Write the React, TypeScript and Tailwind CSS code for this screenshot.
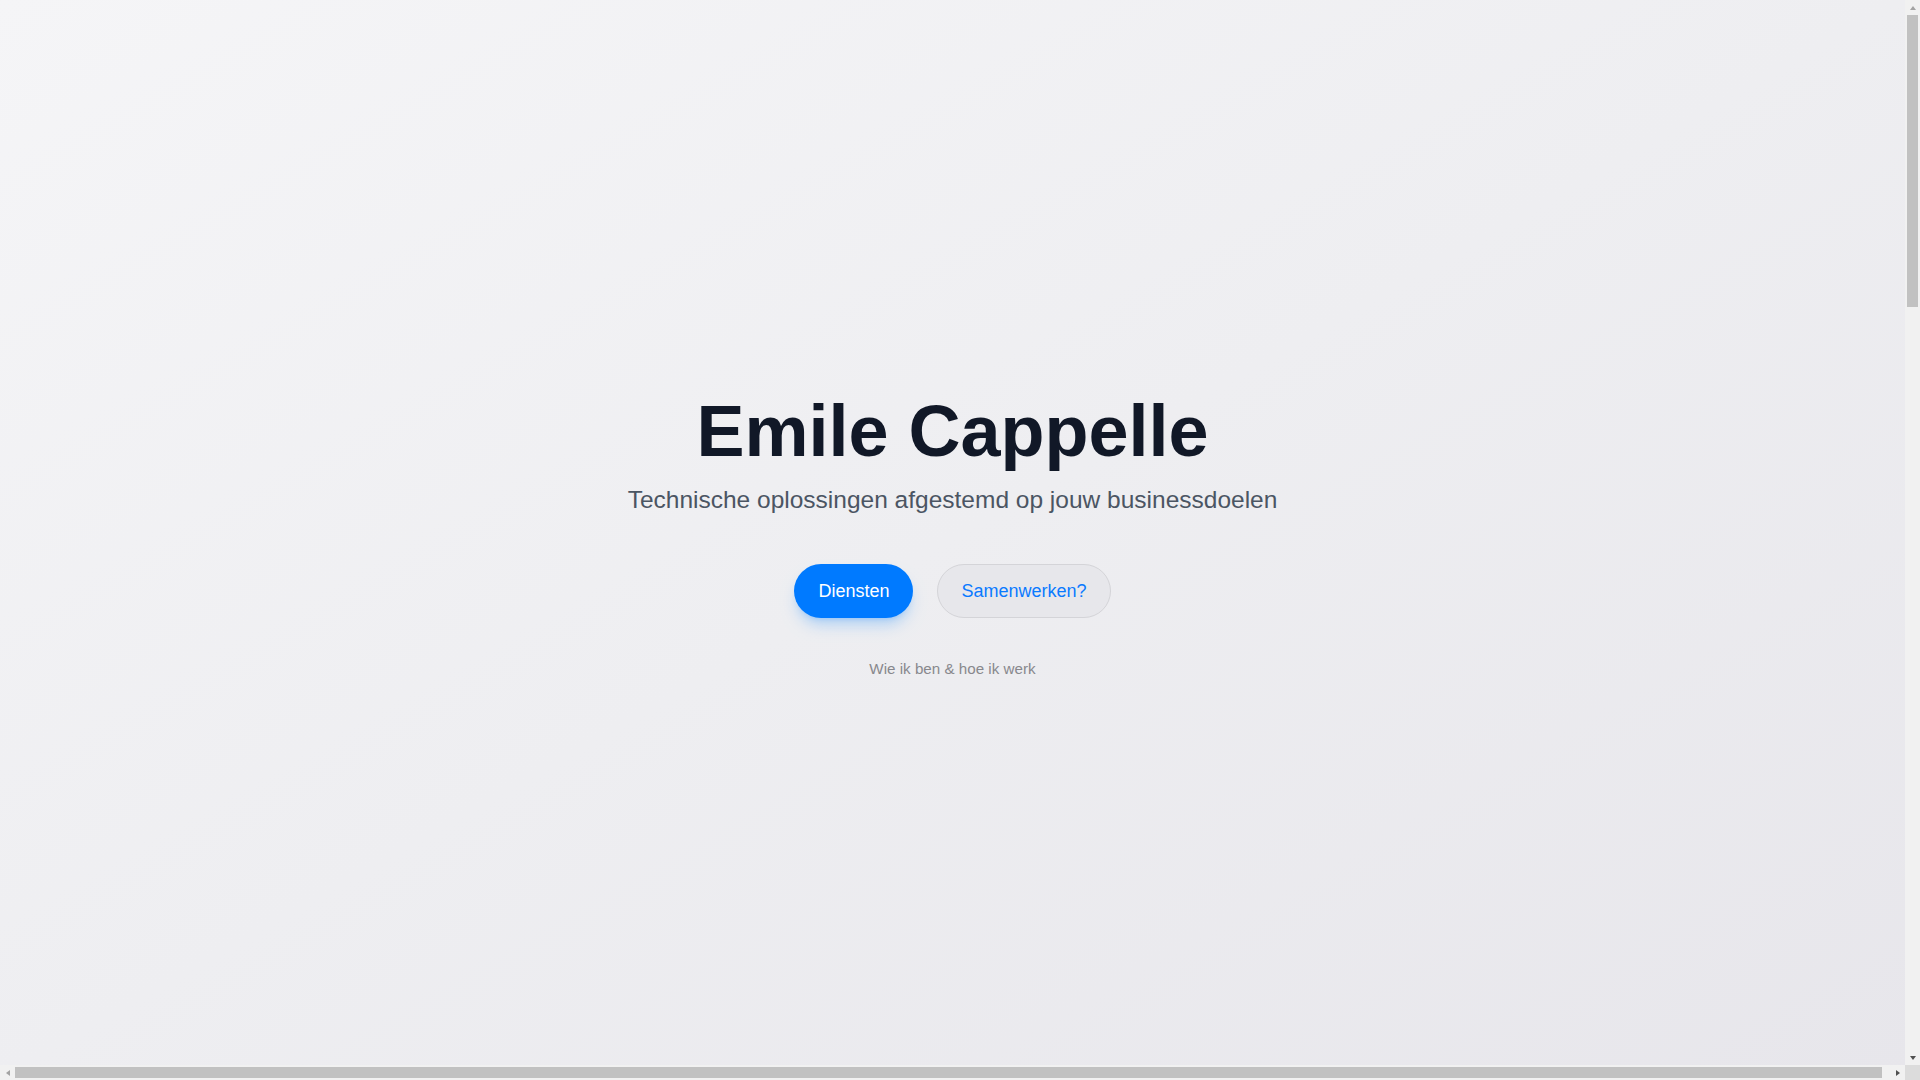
import React from 'react';

// Classic scrollbar chrome, as seen in the reference capture
const Arrow: React.FC<{ dir: 'up' | 'down' | 'left' | 'right' }> = ({ dir }) => {
    const points = {
        up: '1,6 4,2 7,6',
        down: '1,2 4,6 7,2',
        left: '6,1 2,4 6,7',
        right: '2,1 6,4 2,7',
    }[dir];
    return (
        <svg width="8" height="8" viewBox="0 0 8 8">
            <polygon points={points} fill={dir === 'up' || dir === 'left' ? '#a3a3a3' : '#505050'} />
        </svg>
    );
};

const App: React.FC = () => {
    return (
        <div className="h-screen w-full flex flex-col overflow-hidden font-['Liberation_Sans',Arial,sans-serif]">
            <div className="flex flex-1 min-h-0">
                <main className="flex-1 min-w-0 overflow-hidden bg-[#ececf0]">
                    {/* Hero */}
                    <section className="h-[1080px] flex items-center justify-center bg-linear-to-br from-[#f5f5f7] via-[#eeeef1] to-[#e7e6eb]">
                        <div className="flex flex-col items-center text-center pb-[5px]">
                            <h1 className="text-[72px] leading-none font-bold text-[#111827]">Emile Cappelle</h1>
                            <p className="mt-[17px] text-[24.5px] leading-8 text-[#4b5563]">
                                Technische oplossingen afgestemd op jouw businessdoelen
                            </p>

                            <div className="mt-12 flex gap-6">
                                <a
                                    href="#diensten"
                                    className="rounded-full border border-transparent bg-[#007aff] px-[23px] py-3 text-lg text-white shadow-lg shadow-[#007aff]/25"
                                >
                                    Diensten
                                </a>
                                <a
                                    href="#contact"
                                    className="rounded-full border border-[#d4d4d8] bg-[#e4e4e8]/70 px-[23px] py-3 text-lg text-[#0a7aff]"
                                >
                                    Samenwerken?
                                </a>
                            </div>

                            <a href="#over" className="mt-10 text-[15.2px] leading-[22px] text-[#88888d]">
                                Wie ik ben &amp; hoe ik werk
                            </a>
                        </div>
                    </section>
                </main>

                {/* vertical scrollbar */}
                <div className="w-[15px] flex flex-col bg-[#f1f1f1]">
                    <div className="h-[15px] flex items-center justify-center"><Arrow dir="up" /></div>
                    <div className="flex-1 px-[2px]">
                        <div className="h-[292px] bg-[#c1c1c1]" />
                    </div>
                    <div className="h-[15px] flex items-center justify-center"><Arrow dir="down" /></div>
                </div>
            </div>

            {/* horizontal scrollbar */}
            <div className="h-[15px] flex bg-[#f1f1f1]">
                <div className="w-[15px] flex items-center justify-center"><Arrow dir="left" /></div>
                <div className="flex-1 py-[2px] pr-[8px]">
                    <div className="h-full bg-[#c1c1c1]" />
                </div>
                <div className="w-[15px] flex items-center justify-center"><Arrow dir="right" /></div>
                <div className="w-[15px] bg-[#dcdcdc]" />
            </div>
        </div>
    );
};

export default App;
